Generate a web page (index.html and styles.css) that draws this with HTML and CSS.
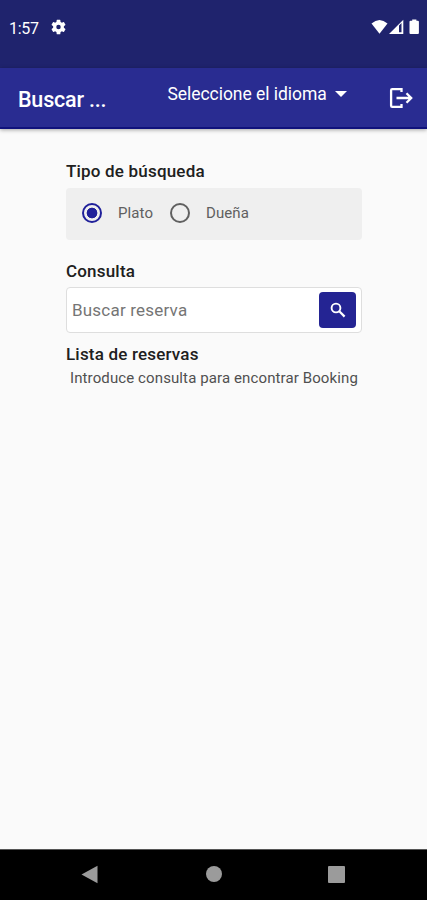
FILE: index.html
```html
<!DOCTYPE html>
<html lang="es">
<head>
<meta charset="utf-8">
<title>Buscar reserva</title>
<link rel="stylesheet" href="styles.css">
</head>
<body>
<div class="status">
  <span class="clock">1:57</span>
  <svg class="gear" width="15" height="16" viewBox="2 2 20 20"><path fill="#fff" fill-rule="evenodd" d="M19.14 12.94c.04-.3.06-.61.06-.94s-.02-.64-.07-.94l2.03-1.58a.49.49 0 0 0 .12-.61l-1.92-3.32a.49.49 0 0 0-.59-.22l-2.39.96a7 7 0 0 0-1.62-.94l-.36-2.54a.48.48 0 0 0-.48-.41h-3.84a.48.48 0 0 0-.47.41l-.36 2.54c-.59.24-1.13.57-1.62.94l-2.39-.96a.49.49 0 0 0-.59.22L2.74 8.87a.48.48 0 0 0 .12.61l2.03 1.58a6 6 0 0 0 0 1.88l-2.03 1.58a.49.49 0 0 0-.12.61l1.92 3.32c.12.22.37.29.59.22l2.39-.96c.5.38 1.03.7 1.62.94l.36 2.54c.05.24.24.41.48.41h3.84c.24 0 .44-.17.47-.41l.36-2.54c.59-.24 1.13-.56 1.62-.94l2.39.96c.22.08.47 0 .59-.22l1.92-3.32a.48.48 0 0 0-.12-.61zM12 15a3 3 0 1 1 0-6 3 3 0 0 1 0 6z"/></svg>
  <svg class="signals" width="50" height="16" viewBox="0 0 50 16"><g fill="#fff"><path d="M.5 4.600Q8.500-2.800 16.500 4.600L8.500 14.800z"/><path fill-rule="evenodd" d="M18 14.900L32.300.7V14.900zM28 6.600V13.300h2.500V4z"/><path d="M39.500 14.900a1 1 0 0 1-1-1V2.800a1 1 0 0 1 1-1h1.700V.6h4.200v1.200h1.500a1 1 0 0 1 1 1v11.100a1 1 0 0 1-1 1z"/></g></svg>
</div>
<header class="appbar">
  <h1 class="title">Buscar ...</h1>
  <div class="language"><span class="language-text">Seleccione el idioma</span><svg width="12" height="6" viewBox="0 0 12 6"><path fill="#fff" d="M0 0h12L6 6z"/></svg></div>
  <svg class="logout" width="24" height="22" viewBox="0 0 24 22" fill="none" stroke="#fff" stroke-width="2.300"><path d="M12.500 5V2.100H3.200Q2.100 2.100 2.100 3.200V18.800Q2.100 19.900 3.200 19.900H12.500V17"/><path d="M7.500 11H22M17.500 6.300L22.200 11L17.500 15.700"/></svg>
</header>
<main class="content">
  <h2 class="label label-type">Tipo de búsqueda</h2>
  <div class="options">
    <span class="radio radio-on"></span><span class="option option-plate">Plato</span>
    <span class="radio"></span><span class="option option-owner">Dueña</span>
  </div>
  <h2 class="label label-query">Consulta</h2>
  <div class="search">
    <span class="placeholder">Buscar reserva</span>
    <span class="search-button"><svg width="16" height="16" viewBox="0 0 16 16" fill="none" stroke="#fff"><circle cx="6" cy="6" r="4.400" stroke-width="1.900"/><path stroke-width="2.200" d="M9.300 9.300L14.600 14.600"/></svg></span>
  </div>
  <h2 class="label label-list">Lista de reservas</h2>
  <p class="hint">Introduce consulta para encontrar Booking</p>
</main>
<nav class="navbar">
  <svg width="17" height="19" viewBox="0 0 17 19"><path fill="#9b9b9b" d="M16.500.8V18.200L.5 9.500z"/></svg>
  <span class="home"></span>
  <span class="recent"></span>
</nav>
</body>
</html>
```
FILE: styles.css
```css
* { box-sizing: border-box; }
body {
  margin: 0;
  width: 427px;
  height: 900px;
  display: flex;
  flex-direction: column;
  overflow: hidden;
  background: #fafafa;
  font-family: Roboto, sans-serif;
}
h1, h2, p { margin: 0; white-space: nowrap; }
svg { display: block; flex: none; }
.status {
  height: 68px;
  flex: none;
  display: flex;
  align-items: flex-start;
  padding: 19px 6px 0 9px;
  background: #1f236d;
  color: #fff;
}
.clock { width: 42px; padding-top: 1px; font-size: 16px; line-height: 18px; letter-spacing: -0.3px; }
.signals { margin-left: auto; }
.appbar {
  height: 61px;
  flex: none;
  display: flex;
  align-items: flex-start;
  padding: 0 14px 0 18px;
  background: #292c91;
  color: #fff;
  border-bottom: 2px solid #10127c;
  box-shadow: 0 1px 4px rgba(0, 0, 0, .35);
}
.title { width: 149.500px; padding-top: 19px; font-size: 21.500px; font-weight: 500; line-height: 25px; letter-spacing: -0.2px; }
.language { display: flex; align-items: center; padding-top: 16px; }
.language-text { width: 167px; font-size: 17.500px; line-height: 20px; letter-spacing: -0.050px; white-space: nowrap; }
.logout { margin: 19px 0 0 auto; }
.content { flex: 1; width: 296px; margin-left: 66px; padding-top: 32px; }
.label { font-size: 17px; font-weight: 500; line-height: 20px; letter-spacing: 0.190px; color: #202020; }
.options {
  height: 52px;
  margin-top: 7px;
  display: flex;
  align-items: center;
  padding: 0 0 2px 16px;
  border-radius: 4px;
  background: #efefef;
}
.radio { width: 20px; height: 20px; flex: none; border: 2px solid #606060; border-radius: 50%; }
.radio-on { border-color: #20209a; background: radial-gradient(circle, #20209a 5px, transparent 5.700px); }
.option { margin-left: 16px; font-size: 15px; letter-spacing: 0.100px; color: #606060; }
.option-plate { width: 52px; }
.label-query { margin-top: 21px; }
.search {
  height: 46px;
  margin-top: 6px;
  display: flex;
  align-items: center;
  justify-content: space-between;
  padding: 0 5px;
  border: 1.500px solid #dedede;
  border-radius: 4px;
  background: #fff;
}
.placeholder { font-size: 17px; letter-spacing: 0.200px; color: #757575; }
.search-button { width: 37px; height: 36px; display: grid; place-items: center; border-radius: 4px; background: #242493; }
.label-list { margin-top: 11px; }
.hint { padding: 5px 0 0 4px; font-size: 15px; line-height: 19px; letter-spacing: 0.110px; color: #505050; }
.navbar {
  height: 51px;
  flex: none;
  display: flex;
  align-items: center;
  justify-content: space-between;
  padding: 0 82px 2px 81px;
  background: #000;
  border-top: 1px solid #555;
}
.home { width: 16px; height: 16px; margin-left: 1px; border-radius: 50%; background: #9b9b9b; }
.recent { width: 17px; height: 17px; border-radius: 1px; background: #9b9b9b; }
```
